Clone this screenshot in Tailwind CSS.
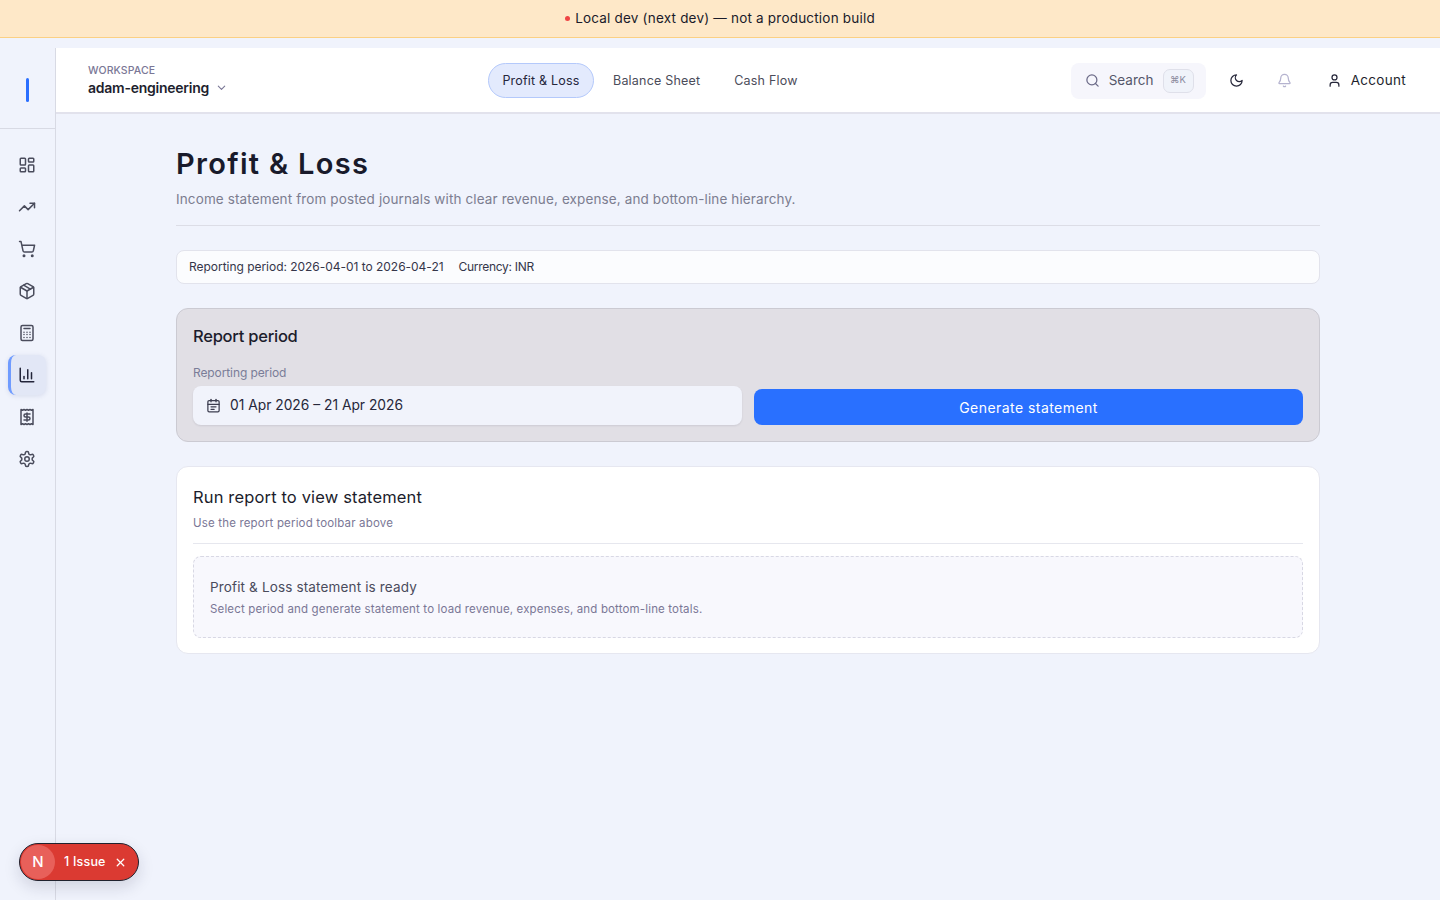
<!DOCTYPE html>
<html lang="en">
<head>
  <meta charset="UTF-8" />
  <meta name="viewport" content="width=device-width, initial-scale=1" />
  <title>Profit & Loss</title>
  <script src="https://cdn.jsdelivr.net/npm/@tailwindcss/browser@4"></script>
</head>
<body class="bg-[#f0f3fc] h-[900px] overflow-hidden font-['Inter',sans-serif] text-[#1a1b2b]">
  <!-- dev banner -->
  <div class="h-[38px] bg-[#fee8c8] border-b border-[#fbd084] flex items-center justify-center gap-[5px] text-[13.5px] tracking-[0.2px]">
    <span class="w-[5px] h-[5px] rounded-full bg-[#ef4444]"></span>
    <span>Local dev (next dev) — not a production build</span>
  </div>

  <div class="flex h-[862px] pt-[10px]">
    <!-- sidebar -->
    <aside class="w-[56px] shrink-0 border-r border-[#d8dae4] flex flex-col">
      <div class="h-[81px] pt-[4px] border-b border-[#d8dae4] flex items-center justify-center">
        <div class="w-[3px] h-[24px] bg-[#2a6fff] rounded-sm"></div>
      </div>
      <nav class="flex flex-col items-center pt-[16px] pr-[1px] gap-[2px] text-[#4a4c5c]">
        <a class="w-[40px] h-[40px] flex items-center justify-center">
          <svg class="w-[18px] h-[18px]" viewBox="0 0 24 24" fill="none" stroke="currentColor" stroke-width="2" stroke-linecap="round" stroke-linejoin="round"><rect x="3" y="3" width="7" height="9" rx="1"/><rect x="14" y="3" width="7" height="5" rx="1"/><rect x="14" y="12" width="7" height="9" rx="1"/><rect x="3" y="16" width="7" height="5" rx="1"/></svg>
        </a>
        <a class="w-[40px] h-[40px] flex items-center justify-center">
          <svg class="w-[18px] h-[18px]" viewBox="0 0 24 24" fill="none" stroke="currentColor" stroke-width="2" stroke-linecap="round" stroke-linejoin="round"><path d="M22 7 13.5 15.5 8.5 10.5 2 17"/><path d="M16 7h6v6"/></svg>
        </a>
        <a class="w-[40px] h-[40px] flex items-center justify-center">
          <svg class="w-[18px] h-[18px]" viewBox="0 0 24 24" fill="none" stroke="currentColor" stroke-width="2" stroke-linecap="round" stroke-linejoin="round"><circle cx="8" cy="21" r="1"/><circle cx="19" cy="21" r="1"/><path d="M2.05 2.05h2l2.66 12.42a2 2 0 0 0 2 1.58h9.78a2 2 0 0 0 1.95-1.57l1.65-7.43H5.12"/></svg>
        </a>
        <a class="w-[40px] h-[40px] flex items-center justify-center">
          <svg class="w-[18px] h-[18px]" viewBox="0 0 24 24" fill="none" stroke="currentColor" stroke-width="2" stroke-linecap="round" stroke-linejoin="round"><path d="M21 8a2 2 0 0 0-1-1.73l-7-4a2 2 0 0 0-2 0l-7 4A2 2 0 0 0 3 8v8a2 2 0 0 0 1 1.73l7 4a2 2 0 0 0 2 0l7-4A2 2 0 0 0 21 16Z"/><path d="m3.3 7 8.7 5 8.7-5"/><path d="M12 22V12"/><path d="m7.5 4.27 9 5.15"/></svg>
        </a>
        <a class="w-[40px] h-[40px] flex items-center justify-center">
          <svg class="w-[18px] h-[18px]" viewBox="0 0 24 24" fill="none" stroke="currentColor" stroke-width="2" stroke-linecap="round" stroke-linejoin="round"><rect x="4" y="2" width="16" height="20" rx="2"/><path d="M8 6h8"/><path d="M8 11h.01M12 11h.01M16 11h.01M8 14h.01M12 14h.01M16 14h.01M8 18h.01M12 18h.01M16 18h.01"/></svg>
        </a>
        <a class="w-[38px] h-[40px] -ml-[1px] flex items-center justify-center rounded-[8px] bg-[#e2e7f6] border-l-[3px] border-[#6f9bff] shadow-[0_1px_5px_rgba(60,80,140,0.14)] pr-[2px]">
          <svg class="w-[18px] h-[18px] text-[#23253a]" viewBox="0 0 24 24" fill="none" stroke="currentColor" stroke-width="2" stroke-linecap="round" stroke-linejoin="round"><path d="M3 3v16a2 2 0 0 0 2 2h16"/><path d="M18 17V9"/><path d="M13 17V5"/><path d="M8 17v-3"/></svg>
        </a>
        <a class="w-[40px] h-[40px] flex items-center justify-center">
          <svg class="w-[18px] h-[18px]" viewBox="0 0 24 24" fill="none" stroke="currentColor" stroke-width="2" stroke-linecap="round" stroke-linejoin="round"><path d="M4 2v20l2-1 2 1 2-1 2 1 2-1 2 1 2-1 2 1V2l-2 1-2-1-2 1-2-1-2 1-2-1-2 1Z"/><path d="M16 8h-6a2 2 0 1 0 0 4h4a2 2 0 1 1 0 4H8"/><path d="M12 17.5v-11"/></svg>
        </a>
        <a class="w-[40px] h-[40px] flex items-center justify-center">
          <svg class="w-[18px] h-[18px]" viewBox="0 0 24 24" fill="none" stroke="currentColor" stroke-width="2" stroke-linecap="round" stroke-linejoin="round"><path d="M12.22 2h-.44a2 2 0 0 0-2 2v.18a2 2 0 0 1-1 1.73l-.43.25a2 2 0 0 1-2 0l-.15-.08a2 2 0 0 0-2.73.73l-.22.38a2 2 0 0 0 .73 2.73l.15.1a2 2 0 0 1 1 1.72v.51a2 2 0 0 1-1 1.74l-.15.09a2 2 0 0 0-.73 2.73l.22.38a2 2 0 0 0 2.73.73l.15-.08a2 2 0 0 1 2 0l.43.25a2 2 0 0 1 1 1.73V20a2 2 0 0 0 2 2h.44a2 2 0 0 0 2-2v-.18a2 2 0 0 1 1-1.73l.43-.25a2 2 0 0 1 2 0l.15.08a2 2 0 0 0 2.73-.73l.22-.39a2 2 0 0 0-.73-2.73l-.15-.08a2 2 0 0 1-1-1.74v-.5a2 2 0 0 1 1-1.74l.15-.09a2 2 0 0 0 .73-2.73l-.22-.38a2 2 0 0 0-2.73-.73l-.15.08a2 2 0 0 1-2 0l-.43-.25a2 2 0 0 1-1-1.73V4a2 2 0 0 0-2-2z"/><circle cx="12" cy="12" r="3"/></svg>
        </a>
      </nav>
    </aside>

    <div class="flex-1 min-w-0">
      <!-- top bar -->
      <header class="relative h-[66px] pt-[1px] bg-white border-b-2 border-[#e2e2ec] flex items-center pl-[32px] pr-[34px]">
        <div class="w-[400px] shrink-0">
          <div class="text-[10.5px] leading-[14px] font-medium text-[#7a7796] tracking-[0.1px]">WORKSPACE</div>
          <div class="flex items-center gap-[7px] text-[14px] leading-[20px] font-semibold text-[#1e1f2e] tracking-[-0.25px]">
            adam-engineering
            <svg class="w-[11px] h-[11px] text-[#7a7796]" viewBox="0 0 24 24" fill="none" stroke="currentColor" stroke-width="2.4" stroke-linecap="round" stroke-linejoin="round"><path d="m5 9 7 7 7-7"/></svg>
          </div>
        </div>
        <nav class="flex items-center text-[12.5px] tracking-[0.2px] text-[#4b4c5a]">
          <a class="h-[35px] w-[106px] pt-[1px] flex items-center justify-center rounded-full bg-[#e3eafd] border border-[#b4c9fb] text-[#25273c]">Profit &amp; Loss</a>
          <a class="ml-[19px] pt-[1px]">Balance Sheet</a>
          <a class="ml-[34px] pt-[1px]">Cash Flow</a>
        </nav>
        <div class="ml-auto flex items-center text-[#1e1f2e]">
          <div class="w-[135px] h-[36px] rounded-[8px] bg-[#f6f6fc] flex items-center pl-[14px] gap-[9px] text-[13.5px] text-[#55566a]">
            <svg class="w-[15px] h-[15px] text-[#6c6b88]" viewBox="0 0 24 24" fill="none" stroke="currentColor" stroke-width="2" stroke-linecap="round" stroke-linejoin="round"><circle cx="11" cy="11" r="8"/><path d="m21 21-4.3-4.3"/></svg>
            <span>Search</span>
            <span class="w-[31px] h-[24px] rounded-[7px] border border-[#dfe0ea] bg-[#f0f3fa] flex items-center justify-center text-[9.5px] text-[#8a8a9e]">⌘K</span>
          </div>
          <svg class="w-[15px] h-[15px] ml-[23px]" viewBox="0 0 24 24" fill="none" stroke="#26273a" stroke-width="2" stroke-linecap="round" stroke-linejoin="round"><path d="M12 3a6 6 0 0 0 9 9 9 9 0 1 1-9-9Z"/></svg>
          <svg class="w-[15px] h-[15px] ml-[33px]" viewBox="0 0 24 24" fill="none" stroke="#b5b3cf" stroke-width="2" stroke-linecap="round" stroke-linejoin="round"><path d="M10.27 21a2 2 0 0 0 3.46 0"/><path d="M3.26 15.33A1 1 0 0 0 4 17h16a1 1 0 0 0 .74-1.67C19.41 13.96 18 12.5 18 8A6 6 0 0 0 6 8c0 4.5-1.41 5.96-2.74 7.33"/></svg>
          <svg class="w-[15px] h-[15px] ml-[35px]" viewBox="0 0 24 24" fill="none" stroke="#26273a" stroke-width="2" stroke-linecap="round" stroke-linejoin="round"><path d="M19 21v-2a4 4 0 0 0-4-4H9a4 4 0 0 0-4 4v2"/><circle cx="12" cy="7" r="4"/></svg>
          <span class="ml-[9px] text-[13.5px] tracking-[0.3px]">Account</span>
        </div>
      </header>

      <!-- page -->
      <main class="pl-[120px] pr-[120px]">
        <div class="pt-[31px] pb-[16px] border-b border-[#dcdde6]">
          <h1 class="text-[29px] leading-[38px] font-semibold tracking-[1.3px] text-[#191a2b]">Profit &amp; Loss</h1>
          <p class="mt-[6px] text-[13.5px] leading-[20px] text-[#7c7d90] tracking-[0.12px]">Income statement from posted journals with clear revenue, expense, and bottom-line hierarchy.</p>
        </div>

        <div class="mt-[24px] h-[34px] bg-white/70 border border-[#e2e3ec] rounded-[8px] px-[12px] flex items-center gap-[15px] text-[12px] text-[#35364a]">
          <span class="tracking-[-0.03px]">Reporting period: 2026-04-01 to 2026-04-21</span>
          <span class="tracking-[-0.3px]">Currency: INR</span>
        </div>

        <section class="mt-[24px] h-[134px] bg-[#e1dfe5] border border-[#cbcad2] rounded-[12px] px-[16px] pt-[15px]">
          <h2 class="text-[16.5px] leading-[24px] font-medium tracking-[-0.25px] text-[#1c1d2c]">Report period</h2>
          <div class="mt-[17px] text-[12px] leading-[16px] tracking-[-0.1px] text-[#7a7d98]">Reporting period</div>
          <div class="mt-[5px] grid grid-cols-2 gap-[12px]">
            <div class="h-[39px] rounded-[8px] bg-[#f1f3fb] shadow-[0_1px_2px_rgba(30,30,60,0.1)] flex items-center pl-[13px] gap-[9px] text-[13.8px] text-[#26273a]">
              <svg class="w-[15px] h-[15px] text-[#3d3e50]" viewBox="0 0 24 24" fill="none" stroke="currentColor" stroke-width="2" stroke-linecap="round" stroke-linejoin="round"><path d="M8 2v4"/><path d="M16 2v4"/><rect x="3" y="4" width="18" height="18" rx="2"/><path d="M3 10h18"/><path d="M8 14h8"/><path d="M8 18h5"/></svg>
              <span>01 Apr 2026 – 21 Apr 2026</span>
            </div>
            <button class="h-[36px] mt-[3px] rounded-[8px] bg-[#2970ff] text-white text-[14px] tracking-[0.45px]">Generate statement</button>
          </div>
        </section>

        <section class="mt-[24px] h-[188px] bg-white border border-[#e6e7f0] rounded-[12px] px-[16px] pt-[18px]">
          <h2 class="text-[16.5px] leading-[24px] tracking-[0.15px] text-[#1c1d2c]">Run report to view statement</h2>
          <p class="mt-[6px] text-[11.5px] leading-[16px] tracking-[0.17px] text-[#7a7796]">Use the report period toolbar above</p>
          <div class="mt-[12px] border-t border-[#e6e7ee]"></div>
          <div class="mt-[12px] h-[82px] rounded-[8px] border border-dashed border-[#d8d8e4] bg-[#f8f8fd] pl-[16px] pt-[21px]">
            <div class="text-[13.5px] leading-[18px] tracking-[0.15px] text-[#4a4b5c]">Profit &amp; Loss statement is ready</div>
            <div class="mt-[5px] text-[11.5px] leading-[16px] tracking-[0.15px] text-[#7a7796]">Select period and generate statement to load revenue, expenses, and bottom-line totals.</div>
          </div>
        </section>
      </main>
    </div>
  </div>

  <!-- next dev indicator -->
  <div class="absolute left-[19px] top-[843px] w-[120px] h-[38px] rounded-full bg-[#db3a32] border border-[#20222e] shadow-[0_6px_16px_rgba(30,30,60,0.15)] flex items-center text-white text-[12.5px] font-medium">
    <span class="w-[34px] h-[34px] ml-[1px] rounded-full bg-[#e8605a] flex items-center justify-center text-[15px]">N</span>
    <span class="ml-[9px] tracking-[0.2px]">1 Issue</span>
    <svg class="w-[13px] h-[13px] ml-[8px]" viewBox="0 0 24 24" fill="none" stroke="currentColor" stroke-width="2.4" stroke-linecap="round"><path d="M18 6 6 18"/><path d="m6 6 12 12"/></svg>
  </div>
</body>
</html>
